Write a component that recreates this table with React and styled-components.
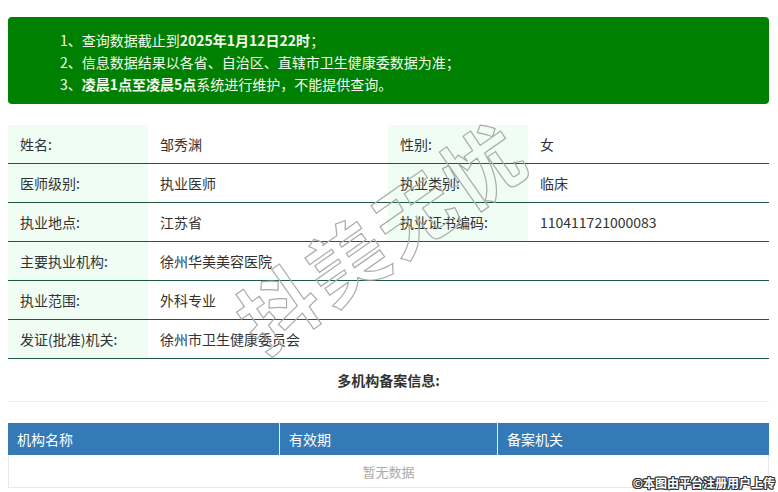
import React from "react";
import styled, { createGlobalStyle } from "styled-components";

const Global = createGlobalStyle`
  html, body { margin: 0; padding: 0; background: #fff; }
  body { font-family: "Microsoft YaHei", "Noto Sans CJK SC", "Noto Sans", sans-serif; color: #333; }
  * { box-sizing: border-box; }
`;

const Page = styled.div`
  position: relative;
  width: 778px;
  height: 492px;
  overflow: hidden;
  padding: 17px 9px 0 8px;
`;

const Notice = styled.div`
  background: #008000;
  border-radius: 4px;
  padding: 12px 0 9px 52px;
  color: #f4faec;
  font-size: 14px;
  line-height: 22px;
`;

const NoticeLine = styled.div`
  white-space: nowrap;
  b { font-weight: 700; }
`;

const InfoTable = styled.div`
  margin-top: 21px;
  display: flex;
  flex-direction: column;
`;

const Row = styled.div`
  display: grid;
  grid-template-columns: 140px 240px 140px 1fr;
  border-bottom: 1px solid #1f5a40;
  height: 39px;
`;

const Label = styled.div`
  background: #effdf5;
  padding-left: 12px;
  display: flex;
  align-items: center;
  font-size: 14px;
  color: #333;
`;

const Value = styled.div`
  padding-left: 12px;
  display: flex;
  align-items: center;
  font-size: 14px;
  color: #333;
  grid-column: ${(p) => (p.$wide ? "span 3" : "auto")};
`;

const SectionTitle = styled.div`
  height: 43px;
  display: flex;
  align-items: center;
  justify-content: center;
  font-size: 14px;
  font-weight: 700;
  color: #333;
  border-bottom: 1px solid #eeeeee;
`;

const ListTable = styled.div`
  margin-top: 21px;
`;

const HeadRow = styled.div`
  display: grid;
  grid-template-columns: 271px 218px 1fr;
  background: #337ab7;
  height: 32px;
`;

const HeadCell = styled.div`
  display: flex;
  align-items: center;
  padding-left: 9px;
  color: #fff;
  font-size: 14px;
  border-left: ${(p) => (p.$first ? "none" : "1px solid #e6eef6")};
`;

const EmptyRow = styled.div`
  height: 33px;
  display: flex;
  align-items: center;
  justify-content: center;
  border: 1px solid #e8e8e8;
  border-top: none;
  color: #aaa;
  font-size: 13px;
`;

const Watermark = styled.div`
  position: absolute;
  left: 214px;
  top: 194px;
  font-size: 78px;
  font-weight: 700;
  letter-spacing: 5px;
  line-height: 1;
  color: transparent;
  -webkit-text-stroke: 1.2px #ababab;
  transform: rotate(-35deg);
  transform-origin: center;
  pointer-events: none;
  white-space: nowrap;
  font-family: "Noto Sans CJK SC", sans-serif;
`;

const Stamp = styled.div`
  position: absolute;
  right: 3px;
  bottom: 1px;
  font-size: 12px;
  font-weight: 700;
  color: #fff;
  font-family: "Noto Sans CJK SC", sans-serif;
  text-shadow: -1px -1px 0 #333, 1px -1px 0 #333, -1px 1px 0 #333, 1px 1px 0 #333,
    0 1px 0 #333, 0 -1px 0 #333, 1px 0 0 #333, -1px 0 0 #333;
`;

const rows = [
  [["姓名:", "邹秀渊"], ["性别:", "女"]],
  [["医师级别:", "执业医师"], ["执业类别:", "临床"]],
  [["执业地点:", "江苏省"], ["执业证书编码:", "110411721000083"]],
  [["主要执业机构:", "徐州华美美容医院"]],
  [["执业范围:", "外科专业"]],
  [["发证(批准)机关:", "徐州市卫生健康委员会"]],
];

export default function App() {
  return (
    <>
      <Global />
      <Page>
        <Notice>
          <NoticeLine>
            1、查询数据截止到<b>2025年1月12日22时</b>；
          </NoticeLine>
          <NoticeLine>2、信息数据结果以各省、自治区、直辖市卫生健康委数据为准；</NoticeLine>
          <NoticeLine>
            3、<b>凌晨1点至凌晨5点</b>系统进行维护，不能提供查询。
          </NoticeLine>
        </Notice>

        <InfoTable>
          {rows.map((r, i) => (
            <Row key={i}>
              {r.map(([l, v], j) => (
                <React.Fragment key={j}>
                  <Label>{l}</Label>
                  <Value $wide={r.length === 1}>{v}</Value>
                </React.Fragment>
              ))}
            </Row>
          ))}
        </InfoTable>

        <SectionTitle>多机构备案信息:</SectionTitle>

        <ListTable>
          <HeadRow>
            <HeadCell $first>机构名称</HeadCell>
            <HeadCell>有效期</HeadCell>
            <HeadCell>备案机关</HeadCell>
          </HeadRow>
          <EmptyRow>暂无数据</EmptyRow>
        </ListTable>

        <Watermark>抖美无忧</Watermark>
        <Stamp>©本图由平台注册用户上传</Stamp>
      </Page>
    </>
  );
}
